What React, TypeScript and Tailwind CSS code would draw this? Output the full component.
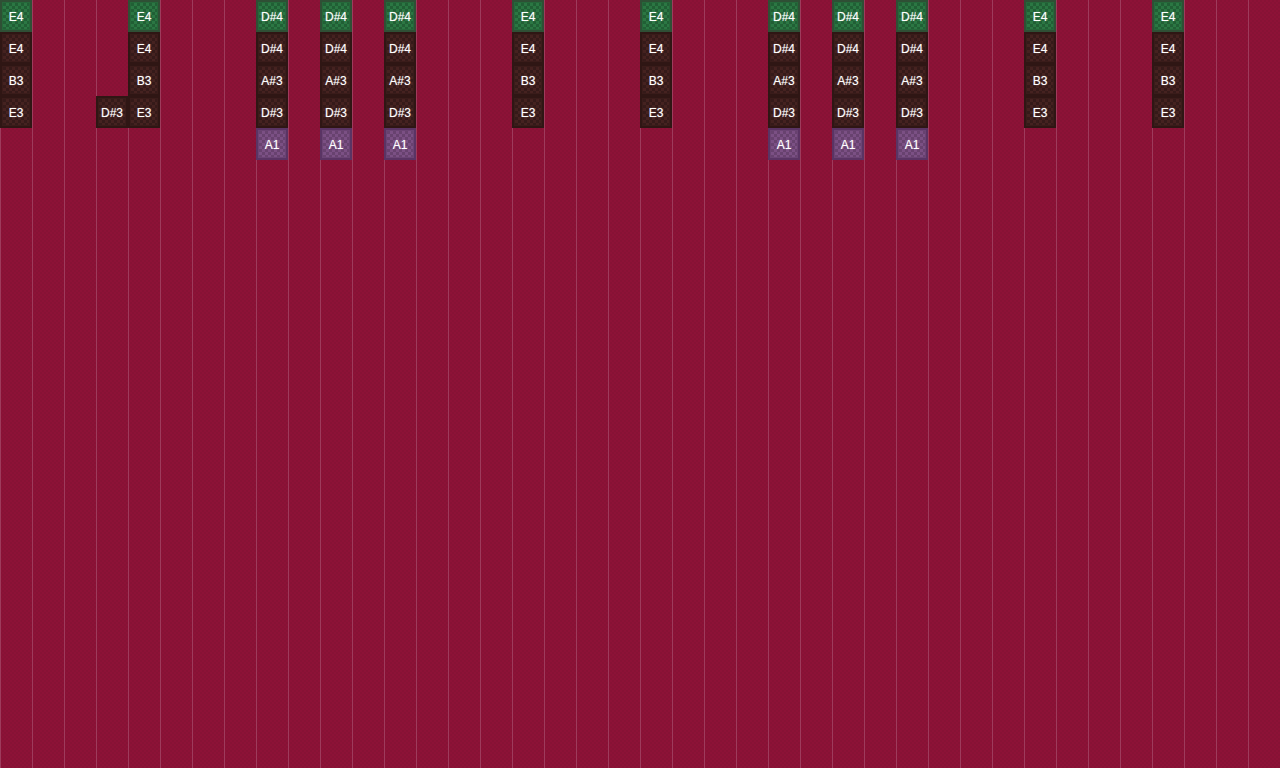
type Kind = "green" | "brown" | "purple";
type Note = { label: string; kind: Kind };

const eCol: Note[] = [
  { label: "E4", kind: "green" },
  { label: "E4", kind: "brown" },
  { label: "B3", kind: "brown" },
  { label: "E3", kind: "brown" },
];
const dCol: Note[] = [
  { label: "D#4", kind: "green" },
  { label: "D#4", kind: "brown" },
  { label: "A#3", kind: "brown" },
  { label: "D#3", kind: "brown" },
  { label: "A1", kind: "purple" },
];
const spacer: Note[] = [
  { label: "", kind: "brown" },
  { label: "", kind: "brown" },
  { label: "", kind: "brown" },
  { label: "D#3", kind: "brown" },
];

const columns: Record<number, Note[]> = {
  0: eCol, 3: spacer, 4: eCol, 8: dCol, 10: dCol, 12: dCol, 16: eCol, 20: eCol,
  24: dCol, 26: dCol, 28: dCol, 32: eCol, 36: eCol,
};

function Cell({ note }: { note: Note }) {
  if (!note.label) return <div className="h-8 w-8" />;
  const box =
    note.kind === "green"
      ? "bg-[#25683a] border-[#2f4f35]"
      : note.kind === "purple"
        ? "bg-[#6b4474] border-[#5a3464]"
        : "bg-[#3a1c1a] border-[#2f1614]";
  const pattern =
    note.kind === "green"
      ? "bg-[repeating-conic-gradient(#2b7743_0_25%,#215f35_0_50%)]"
      : note.kind === "purple"
        ? "bg-[repeating-conic-gradient(#7b5084_0_25%,#68426f_0_50%)]"
        : "bg-[repeating-conic-gradient(#452220_0_25%,#351a19_0_50%)]";
  return (
    <div className={`relative flex h-8 w-8 items-center justify-center border-2 pt-[2px] ${box}`}>
      <div className={`absolute inset-[1px] bg-[length:6px_6px] ${pattern}`} />
      <span className="relative font-['Liberation_Sans',sans-serif] text-[12px] font-medium leading-none text-white [text-shadow:0_0_1px_#ffffff80]">
        {note.label}
      </span>
    </div>
  );
}

export default function App() {
  return (
    <div className="flex h-[768px] w-[1280px] overflow-hidden bg-[#8a1236] bg-[repeating-conic-gradient(#8d1237_0_25%,#871235_0_50%)] bg-[length:4px_4px]">
      {Array.from({ length: 40 }, (_, i) => (
        <div key={i} className="relative h-full w-8 shrink-0 border-l border-[#9e3b5c]">
          {columns[i] && (
            <div className="absolute left-0 top-0 -ml-px flex flex-col">
              {columns[i].map((n, j) => (
                <Cell key={j} note={n} />
              ))}
            </div>
          )}
        </div>
      ))}
    </div>
  );
}
